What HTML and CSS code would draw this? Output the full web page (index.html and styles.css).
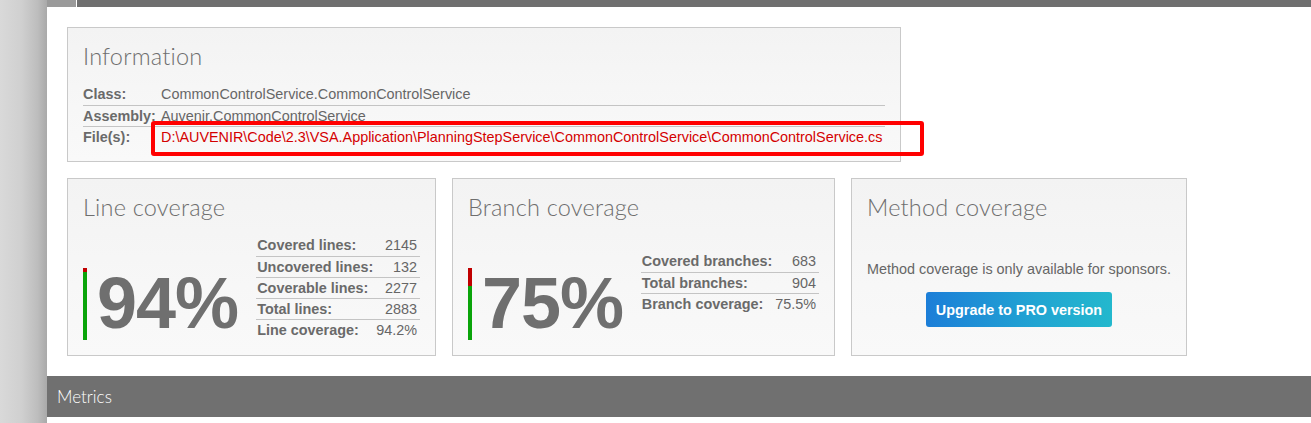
FILE: index.html
```html
<!DOCTYPE html>
<html>
<head>
<meta charset="utf-8">
<title>Summary - CommonControlService</title>
<link rel="stylesheet" href="styles.css">
</head>
<body>
<div class="page">
  <aside class="sidebar"></aside>
  <main class="main">
    <div class="topbar"><span class="topbar-tab"></span><span class="topbar-fill"></span></div>
    <div class="content">
      <section class="card card-info">
        <h1 class="card-title">Information</h1>
        <table class="info-table">
          <tr><th>Class:</th><td>CommonControlService.CommonControlService</td></tr>
          <tr><th>Assembly:</th><td>Auvenir.CommonControlService</td></tr>
          <tr><th>File(s):</th><td class="file">D:\AUVENIR\Code\2.3\VSA.Application\PlanningStepService\CommonControlService\CommonControlService.cs</td></tr>
        </table>
        <div class="highlight"></div>
      </section>

      <div class="cards">
        <section class="card card-line">
          <h1 class="card-title">Line coverage</h1>
          <div class="cov-body">
            <div class="cov-bar"><span class="cov-red" style="height:5.8%"></span><span class="cov-green"></span></div>
            <div class="cov-big">94%</div>
            <table class="cov-table">
              <tr><th>Covered lines:</th><td>2145</td></tr>
              <tr><th>Uncovered lines:</th><td>132</td></tr>
              <tr><th>Coverable lines:</th><td>2277</td></tr>
              <tr><th>Total lines:</th><td>2883</td></tr>
              <tr><th>Line coverage:</th><td>94.2%</td></tr>
            </table>
          </div>
        </section>

        <section class="card card-branch">
          <h1 class="card-title">Branch coverage</h1>
          <div class="cov-body">
            <div class="cov-bar"><span class="cov-red" style="height:24.5%"></span><span class="cov-green"></span></div>
            <div class="cov-big">75%</div>
            <table class="cov-table cov-table-short">
              <tr><th>Covered branches:</th><td>683</td></tr>
              <tr><th>Total branches:</th><td>904</td></tr>
              <tr><th>Branch coverage:</th><td>75.5%</td></tr>
            </table>
          </div>
        </section>

        <section class="card card-method">
          <h1 class="card-title">Method coverage</h1>
          <div class="method-body">
            <p class="method-text">Method coverage is only available for sponsors.</p>
            <a class="pro-button">Upgrade to PRO version</a>
          </div>
        </section>
      </div>
    </div>
    <div class="section-bar">Metrics</div>
  </main>
</div>
</body>
</html>
```

FILE: styles.css
```css
* { box-sizing: border-box; }

html, body {
  margin: 0;
  padding: 0;
  background: #fff;
  height: 100%;
}

body {
  font-family: "Liberation Sans", Arial, sans-serif;
  font-size: 14.4px;
  color: #666;
  overflow: hidden;
}

.page {
  display: flex;
  min-height: 423px;
}

.sidebar {
  width: 47px;
  flex: 0 0 47px;
  background: linear-gradient(to right, #d9d9d9 0%, #d0d0d0 45%, #bdbdbd 80%, #a9a9a9 100%);
}

.main {
  flex: 1;
  display: flex;
  flex-direction: column;
}

.topbar {
  display: flex;
  height: 7px;
}

.topbar-tab {
  width: 30px;
  background: #9a9a9a;
  border-right: 1px solid #fff;
}

.topbar-fill {
  flex: 1;
  background: #6f6f6f;
}

.content {
  padding: 20px 20px 0 20px;
}

.card {
  position: relative;
  border: 1px solid #c9c9c9;
  background: linear-gradient(to bottom, #f3f3f3 0%, #f7f7f7 60%, #f9f9f9 100%);
  padding: 0 15px 15px 15px;
}

.card-title {
  margin: 13px 0 13px 0;
  font-family: Lato, "Open Sans", sans-serif;
  font-weight: 300;
  font-size: 23.5px;
  line-height: 30px;
  color: #6e6e6e;
  letter-spacing: 0.2px;
}

.card-info {
  width: 834px;
  height: 135px;
}

.info-table {
  border-collapse: collapse;
  width: 100%;
}

.info-table th,
.info-table td {
  padding: 0;
  height: 21px;
  line-height: 20px;
  text-align: left;
  white-space: nowrap;
}

.info-table tr + tr th,
.info-table tr + tr td {
  border-top: 1px solid #c4c4c4;
}

.info-table th {
  width: 78px;
  font-weight: bold;
  color: #6a6a6a;
}

.info-table td {
  color: #666;
}

.info-table td.file {
  color: #d40000;
}

.highlight {
  position: absolute;
  left: 83px;
  top: 93px;
  width: 773px;
  height: 35px;
  border: 4px solid #ff0000;
  border-radius: 3px;
  pointer-events: none;
}

.cards {
  display: flex;
  gap: 16px;
  margin-top: 16px;
}

.card-line { width: 369px; height: 178px; }
.card-branch { width: 383px; height: 178px; }
.card-method { width: 336px; height: 178px; }

.cov-body {
  display: flex;
  align-items: center;
  height: 105px;
}

.cov-bar {
  align-self: flex-end;
  display: flex;
  flex-direction: column;
  width: 4px;
  height: 72px;
}

.cov-red {
  background: #c00000;
}

.cov-green {
  flex: 1;
  background: #0aa40a;
}

.cov-big {
  align-self: flex-end;
  margin-left: 10px;
  margin-bottom: 1px;
  font-family: "Liberation Sans", Arial, sans-serif;
  font-weight: bold;
  font-size: 72px;
  line-height: 72px;
  color: #6f6f6f;
  letter-spacing: -1px;
}

.cov-table {
  margin-left: auto;
  border-collapse: collapse;
}

.cov-table-short {
  margin-top: -10px;
}

.cov-table th,
.cov-table td {
  height: 21px;
  line-height: 20px;
  padding: 0 3px 0 1px;
  white-space: nowrap;
}

.cov-table tr + tr th,
.cov-table tr + tr td {
  border-top: 1px solid #c4c4c4;
}

.cov-table th {
  text-align: left;
  font-weight: bold;
  color: #6a6a6a;
  padding-right: 2px;
}

.cov-table td {
  text-align: right;
  color: #666;
}

.method-body {
  display: flex;
  flex-direction: column;
  align-items: center;
  padding-top: 26px;
}

.method-text {
  margin: 0;
  line-height: 17px;
  color: #666;
}

.pro-button {
  display: flex;
  align-items: center;
  justify-content: center;
  margin-top: 14px;
  width: 186px;
  height: 35px;
  border-radius: 3px;
  background: linear-gradient(to right, #1c7ed8 0%, #21a5d2 60%, #23b8cd 100%);
  color: #fff;
  font-weight: bold;
  font-size: 14.4px;
  text-decoration: none;
}

.section-bar {
  margin-top: 20px;
  height: 41px;
  background: #707070;
  color: #fff;
  font-family: Lato, "Open Sans", sans-serif;
  font-weight: 300;
  font-size: 17px;
  line-height: 41px;
  padding-left: 10px;
}
```
